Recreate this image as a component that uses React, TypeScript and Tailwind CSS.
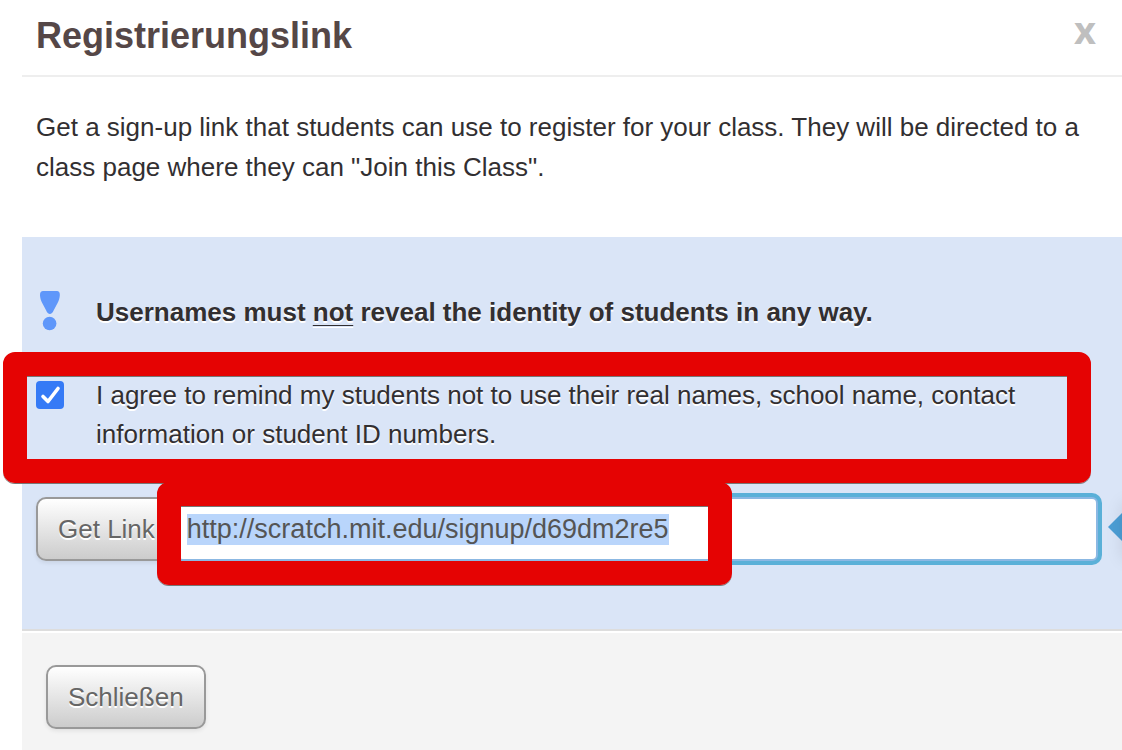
import { useEffect, useRef, useState } from "react";
import type { ButtonHTMLAttributes } from "react";

function GradientButton({ children, ...props }: ButtonHTMLAttributes<HTMLButtonElement>) {
  return (
    <button
      type="button"
      className="h-16 shrink-0 rounded-[10px] border-2 border-[#999] bg-linear-to-b from-white to-[#ccc] px-5 text-[26px] whitespace-nowrap text-[#666] shadow-[0_2px_4px_rgba(0,0,0,0.08)] [text-shadow:0_2px_0_#fff]"
      {...props}
    >
      {children}
    </button>
  );
}

function ExclamationIcon() {
  return (
    <svg viewBox="0 0 20 40" className="h-10 w-5" fill="#5f97fa" aria-hidden="true">
      <path d="M3 0H17C19 0 20 1.500 19.800 4.500C19.600 7.500 18.800 9.500 17.600 12L13.600 19.500C12 24 7.800 24 6.200 19.500L2.200 12C1 9.500 .2 7.500 0 4.500C-.1 1.500 1 0 3 0Z" />
      <circle cx="9.600" cy="32.500" r="6.800" />
    </svg>
  );
}

export default function App() {
  const linkRef = useRef<HTMLInputElement>(null);
  const [agreed, setAgreed] = useState(true);

  useEffect(() => {
    linkRef.current?.focus();
    linkRef.current?.select();
  }, []);

  return (
    <main className="flex min-h-screen flex-col overflow-x-hidden bg-white pl-[22px] font-['Liberation_Sans',Arial,sans-serif] text-[26px] text-[#322f31]">
      <header className="flex items-start justify-between border-b-2 border-[#eee] pt-2 pr-[26px] pb-3 pl-[14px]">
        <h1 className="text-[36px] leading-[55px] font-bold text-[#554747]">Registrierungslink</h1>
        <button
          type="button"
          aria-label="Schließen"
          className="font-['Open_Sans',sans-serif] text-[38px] leading-[42px] font-bold text-[#bfbfbf]"
        >
          x
        </button>
      </header>

      <p className="px-[14px] pt-[30px] pb-[50px] leading-10">
        Get a sign-up link that students can use to register for your class. They will be directed
        to a class page where they can "Join this Class".
      </p>

      <section className="border-b-2 border-[#ddd] bg-[#dae5f7] pt-[54px] pb-[68px] pl-[14px] leading-[39px] [text-shadow:0_2px_0_#fff]">
        <div className="flex items-start">
          <div className="w-[60px] shrink-0 pl-1">
            <ExclamationIcon />
          </div>
          <p className="pt-[2px] font-bold">
            Usernames must{" "}
            <span className="underline decoration-1 underline-offset-4">not</span> reveal the
            identity of students in any way.
          </p>
        </div>

        <div className="relative mt-11 flex items-start pr-14">
          <div className="w-[60px] shrink-0 pt-[5px]">
            <span className="relative block size-7">
              <input
                id="agree"
                type="checkbox"
                checked={agreed}
                onChange={(e) => setAgreed(e.target.checked)}
                className="peer block size-7 appearance-none rounded-[4px] bg-white checked:bg-[#357af6]"
              />
              <svg
                viewBox="0 0 28 28"
                className="pointer-events-none absolute inset-0 hidden size-7 peer-checked:block"
                fill="none"
                stroke="#fff"
                strokeWidth="3.600"
                strokeLinecap="round"
                strokeLinejoin="round"
                aria-hidden="true"
              >
                <path d="M7 15.500L12 20.500L22 7.500" />
              </svg>
            </span>
          </div>
          <label htmlFor="agree">
            I agree to remind my students not to use their real names, school name, contact
            information or student ID numbers.
          </label>
          <div className="pointer-events-none absolute -top-6 right-[31px] -bottom-[29px] -left-[33px] z-10 rounded-xl border-24 border-[#e50303] shadow-[0_1px_0_#777,inset_0_1px_0_#777]" />
        </div>

        <div className="relative mt-[43px] flex pr-6">
          <GradientButton>Get Link</GradientButton>
          <input
            ref={linkRef}
            aria-label="Link"
            type="text"
            defaultValue="http://scratch.mit.edu/signup/d69dm2re5"
            className="h-16 min-w-0 flex-1 rounded-md border-2 border-[#8bb8e3] bg-white px-2 text-[27px] text-[#555] shadow-[0_0_0_4px_#5ab0d8] outline-none [text-shadow:none] selection:bg-[#b9d5fb] selection:text-[#555]"
          />
          <div className="pointer-events-none absolute -top-[15px] -bottom-6 left-[121px] z-10 w-[575px] rounded-xl border-24 border-[#e50303] shadow-[0_1px_0_#777,inset_0_1px_0_#777]" />
          <div className="pointer-events-none absolute top-0 right-0 h-16 w-[14px] overflow-hidden">
            <svg viewBox="0 0 14 64" className="h-16 w-[14px]" fill="#4c9ed5" aria-hidden="true">
              <path d="M0 30L14 16V44Z" />
            </svg>
          </div>
          <div className="pointer-events-none absolute top-1 left-full h-14 w-20 shadow-[0_2px_16px_rgba(0,0,0,0.1)]" />
        </div>
      </section>

      <footer className="mt-[2px] flex-1 bg-[#f4f4f4] px-6 pt-8 pb-5">
        <GradientButton>Schließen</GradientButton>
      </footer>
    </main>
  );
}
